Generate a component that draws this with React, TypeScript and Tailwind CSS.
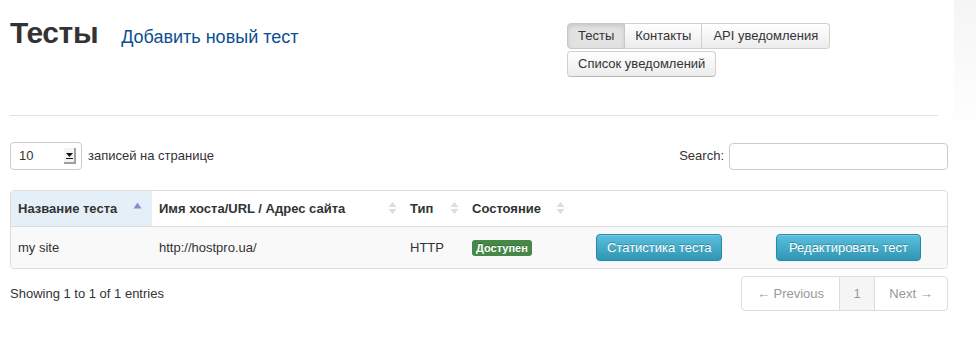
import React from "react"

const SortBoth = () => (
  <svg width="9" height="14" viewBox="0 0 9 14" className="shrink-0">
    <path d="M4.5 1 L8.5 6 L0.5 6 Z" fill="#dcdcdc" />
    <path d="M4.5 13 L8.5 8 L0.5 8 Z" fill="#dcdcdc" />
  </svg>
)

const SortAsc = () => (
  <svg width="9" height="14" viewBox="0 0 9 14" className="shrink-0">
    <path d="M4.5 1.5 L8.5 7.5 L0.5 7.5 Z" fill="#8a8ad8" />
  </svg>
)

const infoBtn =
  "h-[27px] rounded-[4px] border border-[#2a89a8] text-white text-[13px] bg-gradient-to-b from-[#5bc0de] to-[#2f96b4] shadow-[inset_0_1px_0_rgba(255,255,255,0.2),0_1px_2px_rgba(0,0,0,0.05)] [text-shadow:0_-1px_0_rgba(0,0,0,0.25)]"

export default function App() {
  return (
    <div className="flex min-h-[338px] bg-white text-[#333] text-[13px]" style={{ fontFamily: '"Liberation Sans", Arial, sans-serif' }}>
      <div className="w-[954px] shrink-0 pl-[10px] pr-[6px] pt-[13px]">
        {/* Header */}
        <div className="flex items-start">
          <div className="w-[557px] flex items-baseline gap-[23px]">
            <h1 className="text-[30px] leading-[40px] font-bold text-[#333] tracking-[-0.4px]">Тесты</h1>
            <a className="text-[18px] text-[#0b4f91] leading-[24px]">Добавить новый тест</a>
          </div>
          <div className="mt-[10px] w-[270px] flex flex-col gap-[2px]">
            <div className="flex h-[26px]">
              <button className="px-[10px] border border-[#c8c8c8] rounded-l-[4px] bg-[#e2e2e2] shadow-[inset_0_2px_4px_rgba(0,0,0,0.12)]">Тесты</button>
              <button className="px-[10px] border border-l-0 border-[#d0d0d0] bg-gradient-to-b from-white to-[#ececec]">Контакты</button>
              <button className="px-[11px] border border-l-0 border-[#d0d0d0] rounded-r-[4px] bg-gradient-to-b from-white to-[#ececec]">API уведомления</button>
            </div>
            <div className="flex h-[26px]">
              <button className="px-[10px] border border-[#d0d0d0] border-b-[#b8b8b8] rounded-[4px] bg-gradient-to-b from-white to-[#ececec]">Список уведомлений</button>
            </div>
          </div>
        </div>

        <hr className="mt-[38px] w-[928px] border-0 border-t border-[#e2e2e2]" />

        {/* Controls */}
        <div className="mt-[26px] flex items-center justify-between">
          <div className="flex items-center gap-[6px]">
            <div className="w-[72px] h-[28px] border border-[#ccc] rounded-[4px] flex items-center justify-between pl-[8px] pr-[5px]">
              <span>10</span>
              <span className="w-[12px] h-[16px] flex items-center justify-center border-r-2 border-b-2 border-[#a0a0a0] bg-[#f4f4f4]">
                <svg width="7" height="8" viewBox="0 0 7 8">
                  <path d="M0 2 L7 2 L3.5 6 Z" fill="#111" />
                  <rect x="0" y="7" width="7" height="1" fill="#111" />
                </svg>
              </span>
            </div>
            <span>записей на странице</span>
          </div>
          <div className="flex items-center gap-[5px]">
            <span>Search:</span>
            <input className="w-[219px] h-[27px] border border-[#ccc] rounded-[4px] outline-none px-2" />
          </div>
        </div>

        {/* Table */}
        <div className="mt-[20px] border border-[#ddd] rounded-[4px] overflow-hidden">
          <table className="w-full border-collapse table-fixed">
            <colgroup>
              <col className="w-[141px]" />
              <col className="w-[251px]" />
              <col className="w-[62px]" />
              <col className="w-[108px]" />
              <col className="w-[188px]" />
              <col />
            </colgroup>
            <thead>
              <tr className="h-[35px] text-left font-bold">
                <th className="bg-[#e5eff8] pl-[7px] pr-[10px]">
                  <div className="flex items-center justify-between">Название теста<SortAsc /></div>
                </th>
                <th className="pl-[7px] pr-[6px]">
                  <div className="flex items-center justify-between">Имя хоста/URL / Адрес сайта<SortBoth /></div>
                </th>
                <th className="pl-[7px] pr-[6px]">
                  <div className="flex items-center justify-between">Тип<SortBoth /></div>
                </th>
                <th className="pl-[7px] pr-[8px]">
                  <div className="flex items-center justify-between">Состояние<SortBoth /></div>
                </th>
                <th />
                <th />
              </tr>
            </thead>
            <tbody>
              <tr className="h-[42px] bg-[#f9f9f9] border-t border-[#ddd]">
                <td className="pl-[7px]">my site</td>
                <td className="pl-[7px]">http://hostpro.ua/</td>
                <td className="pl-[7px]">HTTP</td>
                <td className="pl-[7px]">
                  <span className="inline-block bg-[#468847] text-white font-bold text-[11px] leading-[14px] px-[4px] py-[1px] rounded-[3px] [text-shadow:0_-1px_0_rgba(0,0,0,0.25)]">Доступен</span>
                </td>
                <td className="pl-[23px]">
                  <button className={`${infoBtn} px-[10px]`}>Статистика теста</button>
                </td>
                <td className="pl-[15px]">
                  <button className={`${infoBtn} px-[12px]`}>Редактировать тест</button>
                </td>
              </tr>
            </tbody>
          </table>
        </div>

        {/* Footer */}
        <div className="mt-[7px] flex items-center justify-between">
          <span>Showing 1 to 1 of 1 entries</span>
          <div className="flex h-[35px] border border-[#ddd] rounded-[4px] text-[#999] overflow-hidden">
            <span className="w-[97px] flex items-center justify-center">← Previous</span>
            <span className="w-[36px] flex items-center justify-center bg-[#f5f5f5] border-l border-r border-[#ddd]">1</span>
            <span className="w-[72px] flex items-center justify-center">Next →</span>
          </div>
        </div>
      </div>
      <div className="flex-1 bg-gradient-to-b from-[#f5f5f5] via-white via-40% to-white" />
    </div>
  )
}
